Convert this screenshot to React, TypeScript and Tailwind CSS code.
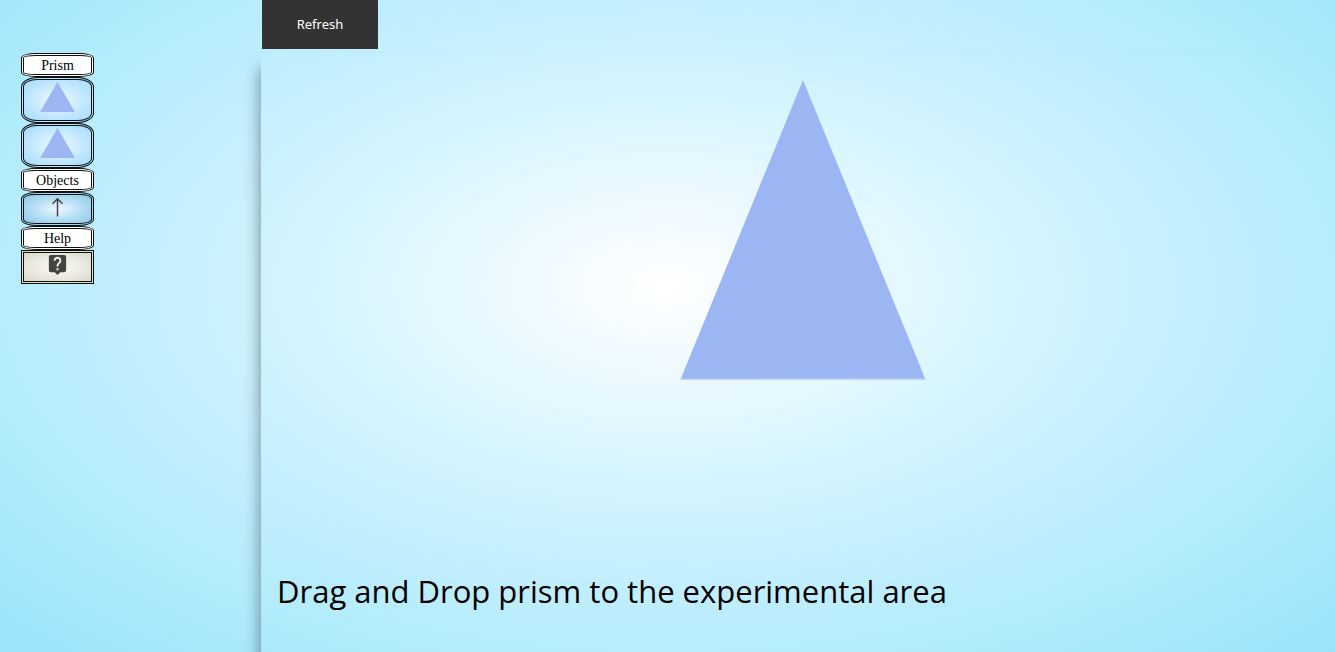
import type { ReactNode } from "react";
import { MdLiveHelp } from "react-icons/md";

function PrismShape({ className }: { className: string }) {
  return (
    <svg viewBox="0 0 246 300" preserveAspectRatio="none" className={className} aria-hidden="true">
      <path d="M123 0 245.5 299.4H0.5Z" fill="#9bb6f3" />
      <path d="M0.5 299.2H245.5" stroke="#c4d5f9" strokeWidth="1.4" />
    </svg>
  );
}

function SectionLabel({ children }: { children: ReactNode }) {
  return (
    <h2 className="flex h-6 items-center justify-center rounded-[20%] border-3 border-double border-[#111] bg-white pt-px text-sm leading-4">
      {children}
    </h2>
  );
}

const prismButton =
  "flex items-start justify-center rounded-[22%] border-3 border-double border-[#111] bg-[radial-gradient(ellipse_at_center,#f0f9ff_0%,#cbebff_47%,#a1dbff_100%)] pt-[2px]";

export default function App() {
  return (
    <div className="flex min-h-screen overflow-hidden bg-[radial-gradient(ellipse_farthest-corner_at_50%_44%,#ffffff_0%,#e7f8ff_22%,#d2f4fd_40%,#c5efff_54%,#b4ecfc_73%,#98e4fb_100%)] text-black">
      <aside className="w-[261px] shrink-0 pt-[53px] pl-[21px] font-['Liberation_Serif',serif]">
        <div className="flex w-[73px] flex-col">
          <SectionLabel>Prism</SectionLabel>
          <div className="grid h-[91px] grid-rows-2">
            <button type="button" aria-label="First prism" className={prismButton}>
              <PrismShape className="h-[30px] w-[35px]" />
            </button>
            <button type="button" aria-label="Second prism" className={prismButton}>
              <PrismShape className="h-[30px] w-[35px]" />
            </button>
          </div>
          <SectionLabel>Objects</SectionLabel>
          <button
            type="button"
            aria-label="Arrow"
            className="flex h-[34px] items-start justify-center rounded-[20%] border-3 border-double border-[#111] bg-[radial-gradient(ellipse_at_center,#f0f9ff_0%,#b8dff5_50%,#8cc8e8_100%)] pt-[2px]"
          >
            <svg viewBox="0 0 13 20" className="h-5 w-[13px]" fill="none" stroke="#444" aria-hidden="true">
              <path d="M6.5 19.5V1.5M1.5 6.8L6.5 1.8L11.5 6.8" strokeWidth="1.5" />
            </svg>
          </button>
          <SectionLabel>Help</SectionLabel>
          <button
            type="button"
            aria-label="Open help"
            className="flex h-[34px] items-start justify-center border-3 border-double border-[#111] bg-[radial-gradient(ellipse_at_center,#fbfaf8_0%,#ecebe2_50%,#d9d9c8_100%)]"
          >
            <MdLiveHelp className="size-[23px] text-[#444]" />
          </button>
        </div>
      </aside>
      <div className="flex min-w-0 flex-1 flex-col">
        <nav className="h-[53px] pl-px">
          <button
            type="button"
            className="h-[49px] w-[116px] bg-[#333] pt-px font-['Noto_Sans',sans-serif] text-[13px] text-white"
          >
            Refresh
          </button>
        </nav>
        <main className="relative flex flex-1 flex-col justify-between gap-8 pt-[27px] pb-[37px]">
          <div className="pointer-events-none absolute inset-0 shadow-[0_16px_16px_0_rgba(0,0,0,0.45)]" />
          <div className="relative pl-[39%]">
            <PrismShape className="h-[300px] w-[246px]" />
          </div>
          <p className="relative pl-4 font-['Open_Sans',sans-serif] text-[31px] leading-[48px]">
            Drag and Drop prism to the experimental area
          </p>
        </main>
      </div>
    </div>
  );
}
